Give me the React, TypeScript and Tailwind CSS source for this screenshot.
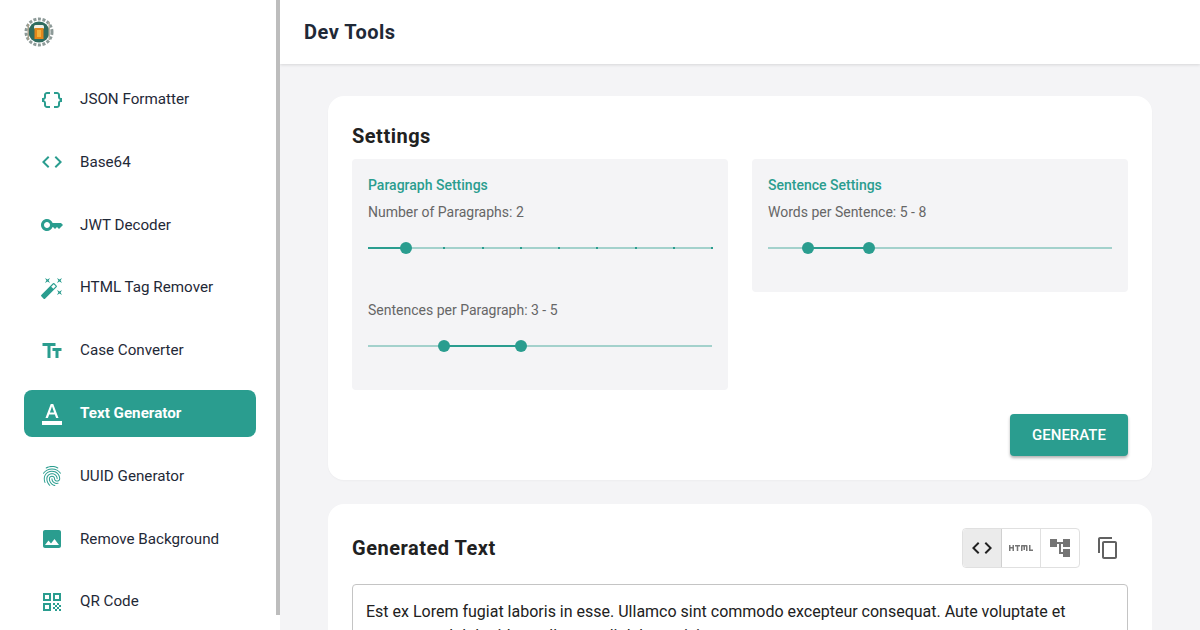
const font = "font-['Roboto',sans-serif]";

function Mui({ d, className }: { d: string; className?: string }) {
  return (
    <svg viewBox="0 0 24 24" className={className} fill="currentColor">
      <path d={d} />
    </svg>
  );
}

const icons = {
  dataObject:
    "M4 7v2c0 .55-.45 1-1 1H2v4h1c.55 0 1 .45 1 1v2c0 1.65 1.35 3 3 3h3v-2H7c-.55 0-1-.45-1-1v-2c0-1.3-.84-2.42-2-2.83v-.34C5.16 11.42 6 10.3 6 9V7c0-.55.45-1 1-1h3V4H7C5.35 4 4 5.35 4 7zm17 3c-.55 0-1-.45-1-1V7c0-1.65-1.35-3-3-3h-3v2h3c.55 0 1 .45 1 1v2c0 1.3.84 2.42 2 2.83v.34c-1.16.41-2 1.52-2 2.83v2c0 .55-.45 1-1 1h-3v2h3c1.65 0 3-1.35 3-3v-2c0-.55.45-1 1-1h1v-4h-1z",
  code: "M9.4 16.6 4.8 12l4.6-4.6L8 6l-6 6 6 6 1.4-1.4zm5.2 0 4.6-4.6-4.6-4.6L16 6l6 6-6 6-1.4-1.4z",
  key: "M21 10h-8.35C11.83 7.67 9.61 6 7 6c-3.31 0-6 2.69-6 6s2.69 6 6 6c2.61 0 4.83-1.67 5.65-4H13l2 2 2-2 2 2 4-4.04L21 10zM7 15c-1.65 0-3-1.35-3-3s1.35-3 3-3 3 1.35 3 3-1.35 3-3 3z",
  wand: "M7.5 5.6 10 7 8.6 4.5 10 2 7.5 3.4 5 2l1.4 2.5L5 7zm12 9.8L17 14l1.4 2.5L17 19l2.5-1.4L22 19l-1.4-2.5L22 14zM22 2l-2.5 1.4L17 2l1.4 2.5L17 7l2.5-1.4L22 7l-1.4-2.5zm-7.63 5.29a.9959.9959 0 0 0-1.41 0L1.29 18.96c-.39.39-.39 1.02 0 1.41l2.34 2.34c.39.39 1.02.39 1.41 0L16.7 11.05c.39-.39.39-1.02 0-1.41l-2.33-2.35zm-1.03 5.49-2.12-2.12 2.44-2.44 2.12 2.12-2.44 2.44z",
  textFields: "M2.5 4v3h5v12h3V7h5V4h-13zm19 5h-9v3h3v7h3v-7h3V9z",
  colorText:
    "M2 20h20v4H2v-4zm3.49-3h2.42l1.27-3.58h5.65L16.09 17h2.42L13.25 3h-2.5L5.49 17zm4.42-5.61 2.03-5.79h.12l2.03 5.79H9.91z",
  fingerprint:
    "M17.81 4.47c-.08 0-.16-.02-.23-.06C15.66 3.42 14 3 12.01 3c-1.98 0-3.86.47-5.57 1.41-.24.13-.54.04-.68-.2-.13-.24-.04-.55.2-.68C7.82 2.52 9.86 2 12.01 2c2.13 0 3.99.47 6.03 1.52.25.13.34.43.21.67-.09.18-.26.28-.44.28zM3.5 9.72c-.1 0-.2-.03-.29-.09-.23-.16-.28-.47-.12-.7.99-1.4 2.25-2.5 3.75-3.27C9.98 4.04 14 4.03 17.15 5.65c1.5.77 2.76 1.86 3.75 3.25.16.22.11.54-.12.7-.23.16-.54.11-.7-.12-.9-1.26-2.04-2.25-3.39-2.94-2.87-1.47-6.54-1.47-9.4.01-1.36.7-2.5 1.7-3.4 2.96-.08.14-.23.21-.39.21zm6.25 12.07c-.13 0-.26-.05-.35-.15-.87-.87-1.34-1.43-2.01-2.64-.69-1.23-1.05-2.73-1.05-4.34 0-2.97 2.54-5.39 5.66-5.39s5.66 2.42 5.66 5.39c0 .28-.22.5-.5.5s-.5-.22-.5-.5c0-2.42-2.09-4.39-4.66-4.39-2.57 0-4.66 1.97-4.66 4.39 0 1.44.32 2.77.93 3.85.64 1.15 1.08 1.64 1.85 2.42.19.2.19.51 0 .71-.11.1-.24.15-.37.15zm7.17-1.85c-1.19 0-2.24-.3-3.1-.89-1.49-1.01-2.38-2.65-2.38-4.39 0-.28.22-.5.5-.5s.5.22.5.5c0 1.41.72 2.74 1.94 3.56.71.48 1.54.71 2.54.71.24 0 .64-.03 1.04-.1.27-.05.53.13.58.41.05.27-.13.53-.41.58-.57.11-1.07.12-1.21.12zM14.91 22c-.04 0-.09-.01-.13-.02-1.59-.44-2.63-1.03-3.72-2.1-1.4-1.39-2.17-3.24-2.17-5.22 0-1.62 1.38-2.94 3.08-2.94 1.7 0 3.08 1.32 3.08 2.94 0 1.07.93 1.94 2.08 1.94s2.08-.87 2.08-1.94c0-3.77-3.25-6.83-7.25-6.83-2.84 0-5.44 1.58-6.61 4.03-.39.81-.59 1.76-.59 2.8 0 .78.07 2.01.67 3.61.1.26-.03.55-.29.64-.26.1-.55-.04-.64-.29-.49-1.31-.73-2.61-.73-3.96 0-1.2.23-2.29.68-3.24 1.33-2.79 4.28-4.6 7.51-4.6 4.55 0 8.25 3.51 8.25 7.83 0 1.62-1.38 2.94-3.08 2.94s-3.08-1.32-3.08-2.94c0-1.07-.93-1.94-2.08-1.94s-2.08.87-2.08 1.94c0 1.71.66 3.31 1.87 4.51.95.94 1.86 1.46 3.27 1.85.27.07.42.35.35.61-.05.23-.26.38-.47.38z",
  image:
    "M21 19V5c0-1.1-.9-2-2-2H5c-1.1 0-2 .9-2 2v14c0 1.1.9 2 2 2h14c1.1 0 2-.9 2-2zM8.5 13.5l2.5 3.01L14.5 12l4.5 6H5l3.5-4.5z",
  qr: "M3 11h8V3H3v8zm2-6h4v4H5V5zM3 21h8v-8H3v8zm2-6h4v4H5v-4zM13 3v8h8V3h-8zm6 6h-4V5h4v4zM21 19h-2v2h2v-2zM13 13h2v2h-2v-2zM15 15h2v2h-2v-2zM13 17h2v2h-2v-2zM15 19h2v2h-2v-2zM17 17h2v2h-2v-2zM17 13h2v2h-2v-2zM19 15h2v2h-2v-2z",
  html: "M3.5 9H5v6H3.5v-2.5h-2V15H0V9h1.5v2h2V9zm14 0H13c-.55 0-1 .45-1 1v5h1.5v-4.5h1V14H16v-3.51h1V15h1.5v-5c0-.55-.45-1-1-1zM11 9H6v1.5h1.75V15h1.5v-4.5H11V9zm13 6v-1.5h-2.5V9H20v6h4z",
  tree: "M22 11V3h-7v3H9V3H2v8h7V8h2v10h4v3h7v-8h-7v3h-2V8h2v3z",
  copy: "M16 1H4c-1.1 0-2 .9-2 2v14h2V3h12V1zm3 4H8c-1.1 0-2 .9-2 2v14c0 1.1.9 2 2 2h11c1.1 0 2-.9 2-2V7c0-1.1-.9-2-2-2zm0 16H8V7h11v14z",
};

const nav = [
  { label: "JSON Formatter", icon: icons.dataObject },
  { label: "Base64", icon: icons.code },
  { label: "JWT Decoder", icon: icons.key },
  { label: "HTML Tag Remover", icon: icons.wand },
  { label: "Case Converter", icon: icons.textFields },
  { label: "Text Generator", icon: icons.colorText, active: true },
  { label: "UUID Generator", icon: icons.fingerprint },
  { label: "Remove Background", icon: icons.image },
  { label: "QR Code", icon: icons.qr },
];

function Logo() {
  return (
    <svg viewBox="0 0 30 30" className="w-[30px] h-[30px]">
      <circle cx="15" cy="15" r="13" fill="none" stroke="#8d9a98" strokeWidth="3" strokeDasharray="3 1.6" />
      <circle cx="15" cy="15" r="10.5" fill="#2f6b5e" />
      <rect x="3.5" y="7" width="1.5" height="16" fill="#a8a08a" />
      <rect x="24.5" y="5" width="1.5" height="18" fill="#b9b4a2" />
      <rect x="10" y="8" width="10" height="4" rx="1.5" fill="#f1efe6" />
      <rect x="10.5" y="11" width="9" height="11" fill="#e2861b" />
      <rect x="13" y="13" width="4" height="7" fill="#f2b23c" />
    </svg>
  );
}

function Slider({ from, to, marks }: { from: number; to: number; marks?: boolean }) {
  return (
    <div className="relative h-3">
      <div className="absolute inset-x-0 top-[5px] h-0.5 bg-[#2a9d8f]/40" />
      <div
        className="absolute top-[5px] h-0.5 bg-[#2a9d8f]"
        style={{ left: `${from}%`, width: `${to - from}%` }}
      />
      {marks &&
        [1, 2, 3, 4, 5, 6, 7, 8, 9].map((i) => (
          <div
            key={i}
            className="absolute top-[5px] w-0.5 h-0.5 -ml-px bg-[#2a9d8f]"
            style={{ left: `${(i / 9) * 100}%` }}
          />
        ))}
      {from > 0 && (
        <div
          className="absolute top-0 w-3 h-3 -ml-1.5 rounded-full bg-[#2a9d8f]"
          style={{ left: `${from}%` }}
        />
      )}
      <div
        className="absolute top-0 w-3 h-3 -ml-1.5 rounded-full bg-[#2a9d8f]"
        style={{ left: `${to}%` }}
      />
    </div>
  );
}

export default function App() {
  return (
    <div className={`flex w-[1200px] h-[630px] overflow-hidden bg-[#f4f4f6] ${font}`}>
      <aside className="relative w-[280px] shrink-0 h-full overflow-hidden bg-white pl-6 pr-6">
        <div className="h-[76px] pt-[17px]">
          <Logo />
        </div>
        <nav className="flex flex-col gap-[15.8px]">
          {nav.map((item) => (
            <div
              key={item.label}
              className={`flex items-center h-[47px] w-[232px] rounded-lg pl-4 ${
                item.active ? "bg-[#2a9d8f] text-white font-bold" : "text-[#1f2937]"
              }`}
            >
              <Mui
                d={item.icon}
                className={`w-6 h-6 shrink-0 ${item.active ? "text-white" : "text-[#2a9d8f]"}`}
              />
              <span className="ml-4 text-[15.2px]">{item.label}</span>
            </div>
          ))}
        </nav>
        <div className="absolute top-0 right-0 w-1 h-[615px] bg-[#bdbdbd]" />
      </aside>

      <div className="flex-1 min-w-0 h-full overflow-hidden">
        <header className="h-16 bg-white flex items-center pl-6 shadow-[0_1px_3px_rgba(0,0,0,0.12)]">
          <h1 className="text-xl font-bold tracking-[0.5px] text-[#1f2937]">Dev Tools</h1>
        </header>

        <main className="px-12 pt-8 flex flex-col gap-6">
          <section className="bg-white rounded-2xl px-6 pt-6 pb-6 h-[384px] shadow-[0_1px_2px_rgba(0,0,0,0.03)]">
            <h2 className="text-xl font-bold tracking-[0.5px] leading-8 text-[#212121]">Settings</h2>
            <div className="grid grid-cols-2 gap-6 items-start mt-[7px]">
              <div className="bg-[#f4f4f6] rounded h-[231px] p-4">
                <h3 className="text-sm font-medium leading-5 text-[#2a9d8f]">Paragraph Settings</h3>
                <p className="text-sm leading-5 mt-[7px] text-[#666666]">Number of Paragraphs: 2</p>
                <div className="mt-5">
                  <Slider from={0} to={11.11} marks />
                </div>
                <p className="text-sm leading-5 mt-[46px] text-[#666666]">Sentences per Paragraph: 3 - 5</p>
                <div className="mt-5">
                  <Slider from={22.22} to={44.44} />
                </div>
              </div>
              <div className="bg-[#f4f4f6] rounded h-[133px] p-4">
                <h3 className="text-sm font-medium leading-5 text-[#2a9d8f]">Sentence Settings</h3>
                <p className="text-sm leading-5 mt-[7px] text-[#666666]">Words per Sentence: 5 - 8</p>
                <div className="mt-5">
                  <Slider from={11.63} to={29.36} />
                </div>
              </div>
            </div>
            <div className="flex justify-end mt-6">
              <button className="w-[118px] h-[42px] rounded bg-[#2a9d8f] text-white text-[15px] font-medium shadow-[0_2px_3px_rgba(0,0,0,0.3)]">
                GENERATE
              </button>
            </div>
          </section>

          <section className="bg-white rounded-2xl px-6 pt-6 h-[200px]">
            <div className="flex items-center justify-between h-10">
              <h2 className="text-xl font-bold tracking-[0.5px] text-[#212121]">Generated Text</h2>
              <div className="flex items-center mr-2">
                <div className="flex w-[118px] h-10 rounded border border-[#e0e0e0] text-[#757575]">
                  <div className="flex-1 flex items-center justify-center bg-[#ebebeb] text-[#212121] border-r border-[#d0d0d0] rounded-l">
                    <Mui d={icons.code} className="w-6 h-6" />
                  </div>
                  <div className="flex-1 flex items-center justify-center border-r border-[#e0e0e0]">
                    <Mui d={icons.html} className="w-6 h-6" />
                  </div>
                  <div className="flex-1 flex items-center justify-center">
                    <Mui d={icons.tree} className="w-6 h-6" />
                  </div>
                </div>
                <Mui d={icons.copy} className="w-6 h-6 ml-4 text-[#616161]" />
              </div>
            </div>
            <div className="mt-4 rounded border border-[#c4c4c4] px-[13px] pt-[15px] text-base leading-6 text-[#212121]">
              Est ex Lorem fugiat laboris in esse. Ullamco sint commodo excepteur consequat. Aute voluptate et
              occaecat ad dolor id est ullamco elit labore nisi.
            </div>
          </section>
        </main>
      </div>
    </div>
  );
}
